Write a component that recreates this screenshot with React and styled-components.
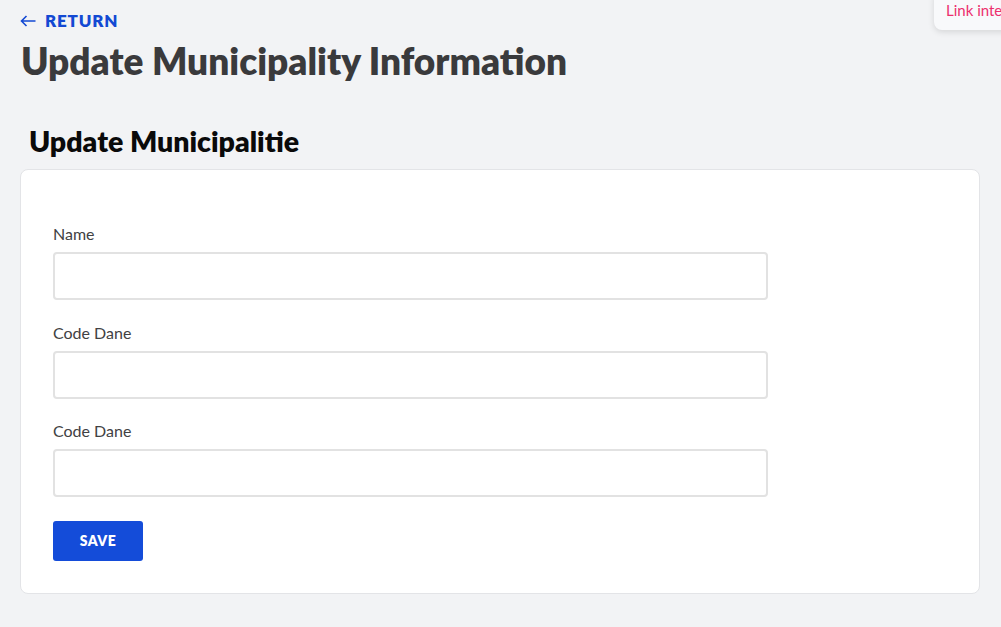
import React from 'react';
import styled, {createGlobalStyle} from 'styled-components';

const GlobalStyle = createGlobalStyle`
    html, body {
        margin: 0;
        padding: 0;
        background: #f2f3f5;
        font-family: "Lato", "Liberation Sans", sans-serif;
    }
    * { box-sizing: border-box; }
`

const Page = styled.div`
    position: relative;
    min-height: 627px;
    padding: 11px 21px 0 20px;
    overflow: hidden;
`
const Return = styled.a`
    display: inline-flex;
    align-items: center;
    gap: 9px;
    color: #1349d3;
    font-size: 17px;
    font-weight: 800;
    line-height: 20px;
    letter-spacing: 0.8px;
    text-decoration: none;
    cursor: pointer;
`
const Title = styled.h1`
    margin: 8px 0 0 1px;
    font-size: 37px;
    line-height: 44px;
    font-weight: 800;
    color: #3a3a3c;
`
const SubTitle = styled.h2`
    margin: 41px 0 0 9px;
    font-size: 28.5px;
    line-height: 34px;
    font-weight: 800;
    color: #0a0a0a;
`
const Card = styled.form`
    margin-top: 11px;
    background: #fff;
    border: 1px solid #e3e4e7;
    border-radius: 8px;
    padding: 54px 32px 32px;
`
const Field = styled.div`
    display: flex;
    flex-direction: column;
    gap: 8px;
    margin-bottom: 22.5px;
    width: 715px;
`
const Label = styled.label`
    font-size: 16px;
    line-height: 20px;
    color: #414143;
`
const Input = styled.input`
    height: 48px;
    border: 2px solid #e2e2e2;
    border-radius: 4px;
    background: #fff;
    padding: 0 12px;
    font-size: 15px;
    font-family: inherit;
    outline: none;
`
const Button = styled.button`
    display: block;
    margin-top: 23.5px;
    width: 90px;
    height: 40px;
    border: none;
    border-radius: 3px;
    background: #144cd9;
    color: #fff;
    font-family: inherit;
    font-size: 14px;
    font-weight: 800;
    letter-spacing: 0.5px;
    cursor: pointer;
`
const Toast = styled.div`
    position: absolute;
    top: -10px;
    left: 934px;
    width: 120px;
    height: 40px;
    padding: 10px 12px 0;
    background: #f8f9fb;
    border-radius: 8px;
    box-shadow: 0 2px 6px rgba(0,0,0,0.12);
    color: #ec2f6e;
    font-size: 15px;
    line-height: 20px;
    white-space: nowrap;
`

const fields = [
    {id: 'name', label: 'Name'},
    {id: 'code', label: 'Code Dane'},
    {id: 'code2', label: 'Code Dane'},
];

export default function App() {
    return (
        <>
            <GlobalStyle />
            <Page>
                <Return>
                    <svg width="16" height="12" viewBox="0 0 16 12" fill="none" stroke="#1349d3" strokeWidth="1.6">
                        <path d="M15.5 6H1.5M6.5 1L1.5 6l5 5" />
                    </svg>
                    RETURN
                </Return>
                <Title>Update Municipality Information</Title>
                <SubTitle>Update Municipalitie</SubTitle>
                <Card onSubmit={e => e.preventDefault()}>
                    {fields.map(f => (
                        <Field key={f.id}>
                            <Label htmlFor={f.id}>{f.label}</Label>
                            <Input id={f.id} type='text' />
                        </Field>
                    ))}
                    <Button type='submit'>SAVE</Button>
                </Card>
                <Toast>Link inte</Toast>
            </Page>
        </>
    )
}
